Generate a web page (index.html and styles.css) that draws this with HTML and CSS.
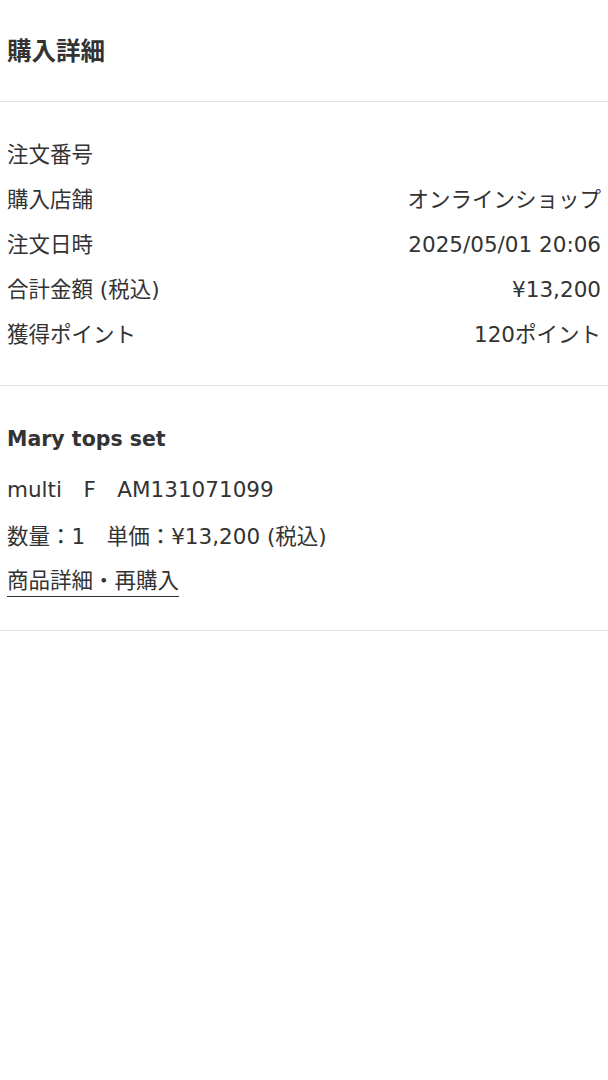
FILE: index.html
```html
<!DOCTYPE html>
<html lang="ja">
<head>
<meta charset="utf-8">
<link rel="stylesheet" href="styles.css">
</head>
<body>
  <header class="page-head">
    <h1 class="title">購入詳細</h1>
  </header>
  <section class="summary">
    <div class="row"><span class="label">注文番号</span><span class="value"></span></div>
    <div class="row"><span class="label">購入店舗</span><span class="value">オンラインショップ</span></div>
    <div class="row"><span class="label">注文日時</span><span class="value">2025/05/01 20:06</span></div>
    <div class="row"><span class="label">合計金額 (税込)</span><span class="value">¥13,200</span></div>
    <div class="row"><span class="label">獲得ポイント</span><span class="value">120ポイント</span></div>
  </section>
  <section class="item">
    <div class="item-name">Mary tops set</div>
    <div class="item-spec">multi&emsp;F&emsp;AM131071099</div>
    <div class="item-price">数量：1&emsp;単価：¥13,200 (税込)</div>
    <div class="item-link-wrap"><a class="item-link" href="#">商品詳細・再購入</a></div>
  </section>
</body>
</html>
```
FILE: styles.css
```css
* { box-sizing: border-box; }
html, body { margin: 0; padding: 0; background: #fff; }
body {
  font-family: "DejaVu Sans", "Noto Sans CJK JP", sans-serif;
  color: #333;
  font-size: 21.5px;
}
.page-head {
  padding: 33px 7px 34px;
  border-bottom: 1px solid #e2e2e2;
}
.title {
  margin: 0;
  font-family: "Noto Sans CJK JP", sans-serif;
  font-size: 24.5px;
  line-height: 34px;
  font-weight: bold;
}
.summary {
  padding: 30px 7px 28px;
  border-bottom: 1px solid #e2e2e2;
}
.row {
  display: flex;
  justify-content: space-between;
  height: 45px;
  line-height: 45px;
}
.item {
  padding: 38px 7px 34px;
  border-bottom: 1px solid #e2e2e2;
}
.item-name {
  font-weight: bold;
  font-size: 20.5px;
  line-height: 30px;
}
.item-spec {
  margin-top: 21px;
  line-height: 30px;
}
.item-price {
  margin-top: 17px;
  line-height: 30px;
}
.item-link-wrap {
  margin-top: 14px;
  line-height: 30px;
}
.item-link {
  color: #333;
  text-decoration: none;
  border-bottom: 1.5px solid #333;
  padding-bottom: 3px;
}
```
